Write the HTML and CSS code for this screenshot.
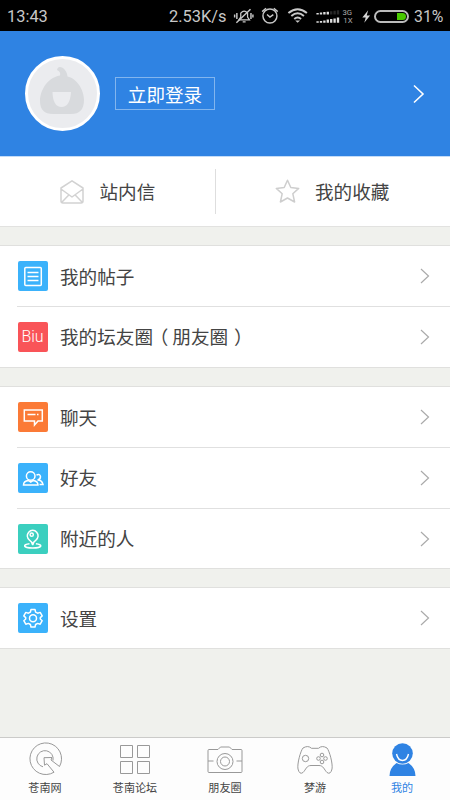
FILE: index.html
```html
<!DOCTYPE html>
<html lang="zh-CN">
<head>
<meta charset="utf-8">
<title>我的</title>
<link rel="stylesheet" href="styles.css">
</head>
<body>
<div class="status">
  <span class="time">13:43</span>
  <span class="speed">2.53K/s</span>
  <svg class="status-icons" width="146" height="31" viewBox="0 0 146 31" fill="none" stroke="#c8c8c8">
    <path d="M7 19h11l-2-3v-4q-3.500-4-7 0v4zM11 21h3" stroke-width="1.300"/>
    <path d="M5 12v6M2.700 13.500v3M19.500 12v6M21.500 13.500v3" stroke-width="1.500"/>
    <path d="M4.500 22L19 8" stroke-width="1.500"/>
    <circle cx="39" cy="15" r="7.200" stroke-width="1.500"/>
    <path d="M36 13.500l3 2.500 3.500-2.500M31 10.500l4-3.500M47 10.500l-4-3.500" stroke-width="1.500"/>
    <path d="M58 12q9.500-8 19 0M61 15q6.500-5.500 13 0M64 18q3.500-3 7 0" stroke-width="2"/>
    <path d="M65 19.500h5l-2.500 2.500z" fill="#c8c8c8" stroke="none"/>
    <path d="M88 13.500v-1.500M91.500 13.500v-2M95 13.500v-2.500M98.500 13.500v-3M88 22v-1.500M91.500 22v-2M95 22v-2.500M98.500 22v-3.500M102 22v-4M105.500 22v-4.500M109 22v-5.500" stroke="#dedede" stroke-width="2.400"/>
    <path d="M102 13.500v-3.500M105.500 13.500v-4M109 13.500v-4.500" stroke="#292929" stroke-width="2.400"/>
    <text x="113.500" y="13.500" class="net">3G</text>
    <text x="114.500" y="22.500" class="net">1X</text>
    <path d="M140 9l-6 7.500h3.500l-1.500 5.500 6-7.500h-3.500z" fill="#d5d5d5" stroke="none"/>
  </svg>
  <span class="battery"><i></i></span>
  <span class="percent">31%</span>
</div>

<header class="profile">
  <div class="avatar">
    <svg width="67" height="67" viewBox="0 0 67 67">
      <path d="M31 15.500q1-4-3-5.500 1-5 6-2 4 3 4.500 8.500C47 18 55 29 55 40q0 14-13 14H24Q11 54 11 41c0-9 6-23 20-25.500z" fill="#d8dadd"/>
      <path d="M23.500 32h18.500q-1 15-9.500 15t-9-15z" fill="#ebecef"/>
    </svg>
  </div>
  <a class="login">立即登录</a>
  <svg class="go" width="12" height="20" viewBox="0 0 12 20"><path d="M1 1.500l9 8.500-9 8.500" fill="none" stroke="#fff" stroke-width="1.600"/></svg>
</header>

<nav class="quick">
  <a class="quick-item mail">
    <svg width="24" height="24" viewBox="0 0 24 24" fill="none" stroke="#d2d2d2" stroke-width="1.500" stroke-linejoin="round"><path d="M1 8L12 .8l11 7.200V21q0 2-2 2H3q-2 0-2-2zM1 9l11 8 11-8M1.800 22.300l7-7.300M22.200 22.300l-7-7.300"/></svg>
    <span>站内信</span>
  </a>
  <a class="quick-item fav">
    <svg width="25" height="25" viewBox="0 0 25 25" fill="none" stroke="#cecece" stroke-width="1.500" stroke-linejoin="round"><path d="M12.500 1.300l3.300 7.200 7.900.9-5.900 5.300 1.800 8.300-7.100-4-7.100 4 1.800-8.300-5.900-5.300 7.900-.9z"/></svg>
    <span>我的收藏</span>
  </a>
</nav>

<section class="group">
  <a class="row">
    <svg class="icon sky" viewBox="0 0 30 30"><rect x="6.800" y="6.500" width="16.500" height="18" rx="1"/><path d="M9.500 11.500h11M9.500 15.500h11M9.500 19.500h11"/></svg>
    <span class="label">我的帖子</span>
    <svg class="chev" viewBox="0 0 10 16"><path d="M1 1l7.500 7L1 15"/></svg>
  </a>
  <a class="row">
    <span class="icon red">Biu</span>
    <span class="label">我的坛友圈<span class="open">（</span>朋友圈<span class="close">）</span></span>
    <svg class="chev" viewBox="0 0 10 16"><path d="M1 1l7.500 7L1 15"/></svg>
  </a>
</section>

<section class="group">
  <a class="row">
    <svg class="icon orange" viewBox="0 0 30 30"><path d="M6.300 8h18v11H20l-3.500 4v-4H6.300zM9.500 12.500h8M19 12.500h1.500"/></svg>
    <span class="label">聊天</span>
    <svg class="chev" viewBox="0 0 10 16"><path d="M1 1l7.500 7L1 15"/></svg>
  </a>
  <a class="row">
    <svg class="icon sky" viewBox="0 0 30 30"><circle cx="12.700" cy="13" r="4.300"/><path d="M5.500 22q0-4 5-4.500l2.200 1.500 2.300-1.500q5 .5 5 4.500zM18.500 12q3.500-1.500 4 1.500 0 3-3 3.500 4.500 0 5.500 4.500h-3.500"/></svg>
    <span class="label">好友</span>
    <svg class="chev" viewBox="0 0 10 16"><path d="M1 1l7.500 7L1 15"/></svg>
  </a>
  <a class="row last">
    <svg class="icon teal" viewBox="0 0 30 30"><path d="M14.700 21q-.8-3.500-3.200-4.900a5.400 5.400 0 1 1 6.400 0q-2.400 1.400-3.200 4.900zM11.500 19.800c-7 .7-7 4.200 3.200 4.200s10.200-3.500 3.200-4.200"/><circle cx="13.700" cy="10.700" r="1.600"/></svg>
    <span class="label">附近的人</span>
    <svg class="chev" viewBox="0 0 10 16"><path d="M1 1l7.500 7L1 15"/></svg>
  </a>
</section>

<section class="group">
  <a class="row">
    <svg class="icon sky" viewBox="0 0 30 30"><circle cx="15" cy="15.300" r="3.500"/><path d="M13 6.500h4l.6 2.600 2 1.100 2.600-.8 2 3.500-1.900 1.700v1.400l1.900 1.700-2 3.500-2.600-.8-2 1.100-.6 2.600h-4l-.6-2.600-2-1.100-2.600.8-2-3.500 1.900-1.700v-1.400l-1.900-1.700 2-3.500 2.600.8 2-1.100z" stroke-linejoin="round"/></svg>
    <span class="label">设置</span>
    <svg class="chev" viewBox="0 0 10 16"><path d="M1 1l7.500 7L1 15"/></svg>
  </a>
</section>

<footer class="tabs">
  <a class="tab">
    <svg viewBox="0 0 36 36"><path d="M27 30.200A15.800 15.800 0 1 1 32.500 24.500L24 18l1-2.500-8 .2.500 7.500 2.500-1.500L27 30.200M16 24.800A8.200 8.200 0 1 1 26 18.500"/></svg>
    <span>苍南网</span>
  </a>
  <a class="tab">
    <svg viewBox="0 0 36 36"><path d="M3.500 3.500h12v12h-12zM20.500 3.500h12v12h-12zM3.500 19.500h12v12h-12zM20.500 19.500h12v12h-12z"/></svg>
    <span>苍南论坛</span>
  </a>
  <a class="tab">
    <svg viewBox="0 0 36 36"><path d="M2 7.500h9L13.500 5h9L25 7.500h9q1 0 1 1v21q0 1-1 1H2q-1 0-1-1v-21q0-1 1-1zM1 19h5.500M29.500 19H35"/><circle cx="18" cy="19.500" r="8"/><circle cx="18" cy="19.500" r="4.500"/></svg>
    <span>朋友圈</span>
  </a>
  <a class="tab">
    <svg viewBox="0 0 36 36"><path d="M6 6q5-3 8.500.3h7Q25 3 30 6c2.500 3 6 16 5 21q-1.500 6-5 3.500c-3-3-3.500-7-8-7h-8c-4.500 0-5 4-8 7Q2.500 33 1 27C0 22 3.500 9 6 6z"/><circle cx="8.500" cy="16.500" r="3.200"/><circle cx="25" cy="13" r="1.800"/><circle cx="21.500" cy="16.500" r="1.800"/><circle cx="28.500" cy="16.500" r="1.800"/><circle cx="25" cy="20" r="1.800"/></svg>
    <span>梦游</span>
  </a>
  <a class="tab active">
    <svg viewBox="0 0 36 36"><circle cx="18.500" cy="11.500" r="10.300" fill="#2f83e3" stroke="none"/><path d="M5.500 34q0-8 7-13 6 3 12 0 7 5 7 13z" fill="#2f83e3" stroke="none"/><path d="M12.500 12q1.500 6.500 6 6.500t6-6.500" stroke="#fff" stroke-width="1.400"/></svg>
    <span>我的</span>
  </a>
</footer>
</body>
</html>
```
FILE: styles.css
```css
* { box-sizing: border-box; }
body {
  margin: 0;
  width: 450px;
  height: 800px;
  display: flex;
  flex-direction: column;
  background: #f0f1ed;
  color: #444;
  font-family: "Noto Sans CJK SC", sans-serif;
  font-size: 18.6px;
  overflow: hidden;
}
svg { display: block; flex: none; }

.status {
  height: 31px;
  flex: none;
  display: flex;
  align-items: center;
  padding: 1px 0 0 7px;
  background: #000;
  color: #c8c8c8;
  font: 16.4px Roboto, sans-serif;
}
.time { width: 162px; }
.speed { width: 63px; white-space: nowrap; }
.status-icons { width: 142px; margin-right: 0; overflow: visible; }
.net { font: 8px Roboto, sans-serif; fill: #aaa; stroke: none; }
.battery {
  width: 35px;
  height: 13px;
  border: 2px solid #bbb;
  border-radius: 7px;
  padding: 1px;
  display: flex;
  justify-content: flex-end;
}
.battery i { width: 9px; background: #48c800; border-radius: 0 4px 4px 0; }
.percent { margin-left: 5px; font-size: 15.8px; }

.profile {
  height: 126px;
  flex: none;
  display: flex;
  align-items: center;
  padding: 0 25px;
  background: #2f83e3;
  border-bottom: 1px solid #c3dcf8;
}
.avatar {
  width: 75px;
  height: 75px;
  border: 3px solid #fff;
  border-radius: 50%;
  background: #ebecef;
  display: flex;
  align-items: center;
  justify-content: center;
}
.login {
  width: 100px;
  height: 33px;
  margin-left: 15px;
  border: 1px solid #82b5ee;
  color: #fff;
  text-align: center;
  line-height: 31px;
}
.go { margin-left: auto; }

.quick { height: 70px; flex: none; display: flex; align-items: center; background: #fff; border-bottom: 1px solid #e2e2e0; }
.quick-item { display: flex; align-items: center; height: 45px; }
.quick-item span { line-height: 28px; padding-bottom: 2px; }
.mail { width: 216px; padding-left: 60px; gap: 15.5px; border-right: 1px solid #dedede; }
.fav { padding-left: 59px; gap: 15px; }

.group { margin-top: 18px; flex: none; background: #fff; border: solid #e0e0de; border-width: 1px 0; }
.row { height: 60px; margin-left: 17px; display: flex; align-items: center; padding-right: 20px; }
.row + .row { height: 61px; border-top: 1px solid #e0e0e0; }
.row + .last { height: 60px; }
.icon { width: 30px; height: 30px; margin-left: 0.5px; border-radius: 2px; flex: none; fill: none; stroke: #fff; stroke-width: 1.5; }
.sky { background: #3bb2fb; }
.red { background: #f95458; color: #fff; font: 300 16px/30px Roboto, sans-serif; text-align: center; }
.orange { background: #fb7a36; }
.teal { background: #3bcfbf; }
.label { margin-left: 12.5px; line-height: 28px; padding-bottom: 1px; }
.row + .row .label { padding-bottom: 2px; }
.open, .close { font-feature-settings: "halt"; }
.open { margin: 0 4px 0 6px; }
.close { margin-left: 6px; }
.chev { width: 10px; height: 16px; margin-left: auto; fill: none; stroke: #aaa; stroke-width: 1.2; }

.tabs { height: 63px; flex: none; margin-top: auto; display: flex; background: #fdfdfd; border-top: 1px solid #cbcbc9; }
.tab { width: 90px; display: flex; flex-direction: column; align-items: center; padding-top: 4px; font-size: 11.1px; line-height: 16px; }
.tab svg { width: 36px; height: 36px; fill: none; stroke: #999; stroke-width: 1; }
.tab span { margin-top: 1px; }
.active { color: #2f83e3; padding-right: 6px; }
```
